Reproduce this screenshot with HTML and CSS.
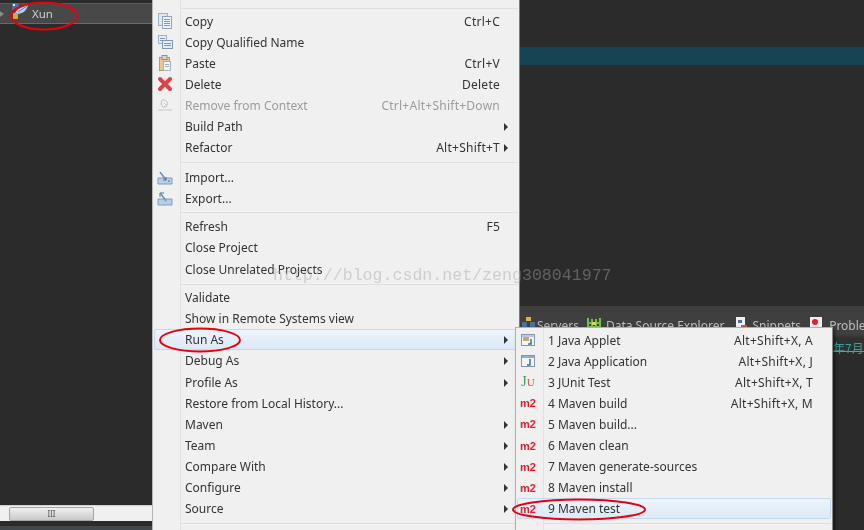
FILE: index.html
```html
<!DOCTYPE html>
<html lang="en">
<head>
<meta charset="utf-8">
<title>Run As menu</title>
<link rel="stylesheet" href="styles.css">
</head>
<body>
<div class="workbench">
  <div class="tree-row"><span class="twisty"></span>
    <svg class="ico" width="18" height="18" viewBox="0 0 18 18"><rect x="1" y="0" width="7" height="7" fill="#4a6f9c"/><rect x="2" y="1" width="2" height="2" fill="#dfe8f2"/><path d="M4 10C8 4 13 3 17 2c-1 5-5 9-11 9z" fill="#b9d0e8"/><path d="M7 9c3-2 6-4 9-6" stroke="#5f86b3" fill="none"/><rect x="2" y="10" width="5" height="6" rx="1" fill="#d9a53c"/></svg>
    <span class="tree-label">Xun</span></div>
  <div class="hscroll"><span class="thumb">III</span></div>
  <div class="statusbar"></div>
  <div class="teal"></div>
  <div class="panel">
    <div class="tabs">
      <span class="tab tab-servers"><svg width="13" height="13" viewBox="0 0 13 13"><rect x="4" y="0" width="5" height="4" fill="#d9b44a"/><rect x="0" y="5" width="5" height="5" fill="#4a6f9c"/><rect x="8" y="5" width="5" height="5" fill="#4a6f9c"/></svg>Servers</span>
      <span class="tab tab-ds"><svg width="14" height="14" viewBox="0 0 14 14"><path d="M1 1v12M5 2v11M9 2v11M13 1v12M1 6h12M1 10h12" stroke="#6fbf4a" stroke-width="2"/><rect x="5" y="5" width="4" height="3" fill="#e3d35a"/></svg>Data Source Explorer</span>
      <span class="tab tab-sn"><svg width="13" height="14" viewBox="0 0 13 14"><rect x="1" y="0" width="9" height="13" fill="#f0f0f0"/><rect x="3" y="3" width="4" height="3" fill="#4a6f9c"/><rect x="6" y="8" width="6" height="3" fill="#c65050"/></svg>Snippets</span>
      <span class="tab tab-pr"><svg width="13" height="14" viewBox="0 0 13 14"><rect x="0" y="0" width="12" height="13" fill="#eeeeee"/><circle cx="5" cy="5" r="3" fill="#e0202a"/></svg>Proble</span>
    </div>
    <div class="panel-date">年7月</div>
  </div>

  <div class="menu main-menu">
    <div class="gutter"></div>
    <div class="sep top"></div>
    <div class="item"><span class="i"><svg width="16" height="16" viewBox="0 0 16 16"><rect x="1.500" y="0.500" width="9" height="12" fill="#dfe8f2" stroke="#9db2c8"/><rect x="5.500" y="3.500" width="9" height="12" fill="#eef3f9" stroke="#8ea5bd"/><path d="M7 6.500h6M7 8.500h6M7 10.500h6M7 12.500h6" stroke="#7f99b5"/></svg></span><span class="t">Copy</span><span class="k">Ctrl+C</span></div>
    <div class="item"><span class="i"><svg width="16" height="16" viewBox="0 0 16 16"><rect x="1.500" y="1.500" width="8" height="8" fill="#e6edf5" stroke="#9db2c8"/><path d="M3 4.500h5M3 6.500h5" stroke="#7f99b5"/><rect x="5.500" y="6.500" width="10" height="8" fill="#e4edf6" stroke="#7f99b5"/><path d="M7 9.500h7M7 11.500h7" stroke="#7f99b5"/></svg></span><span class="t">Copy Qualified Name</span></div>
    <div class="item"><span class="i"><svg width="16" height="16" viewBox="0 0 16 16"><rect x="2.500" y="2.500" width="10" height="13" fill="#e5c88e" stroke="#b39a66"/><rect x="5" y="0.500" width="5" height="4" fill="#d6d6d6" stroke="#8f8f8f"/><rect x="6.500" y="6.500" width="7" height="9" fill="#f2f6fb" stroke="#9fb2c6"/><path d="M8 9.500h4M8 11.500h4" stroke="#9fb2c6"/></svg></span><span class="t">Paste</span><span class="k">Ctrl+V</span></div>
    <div class="item"><span class="i"><svg width="16" height="16" viewBox="0 0 16 16"><path d="M3 3l10 10M13 3L3 13" stroke="#d9434a" stroke-width="4" stroke-linecap="round"/></svg></span><span class="t">Delete</span><span class="k">Delete</span></div>
    <div class="item off"><span class="i"><svg width="16" height="16" viewBox="0 0 16 16"><path d="M5 3h3l3 3-2 4H6L4 7zM7 6l2 2M1 13h14" fill="none" stroke="#c4c4c4"/></svg></span><span class="t">Remove from Context</span><span class="k">Ctrl+Alt+Shift+Down</span></div>
    <div class="item sub"><span class="i"></span><span class="t">Build Path</span></div>
    <div class="item sub"><span class="i"></span><span class="t">Refactor</span><span class="k">Alt+Shift+T</span></div>
    <div class="sep s9"></div>
    <div class="item"><span class="i"><svg width="16" height="16" viewBox="0 0 16 16"><path d="M1 8h14v6H1z" fill="#b8cfe6" stroke="#7f9fbf"/><path d="M3 2l6 8" stroke="#6f8fb0" stroke-width="1.500"/><path d="M6 10h3V7M11 11h2" stroke="#4a6f9c" fill="none"/></svg></span><span class="t">Import...</span></div>
    <div class="item"><span class="i"><svg width="16" height="16" viewBox="0 0 16 16"><path d="M1 8h14v6H1z" fill="#b8cfe6" stroke="#7f9fbf"/><path d="M9 10L4 3" stroke="#6f8fb0" stroke-width="1.500"/><path d="M3 6V2h4" stroke="#4a6f9c" fill="none"/></svg></span><span class="t">Export...</span></div>
    <div class="sep s7"></div>
    <div class="item"><span class="i"></span><span class="t">Refresh</span><span class="k">F5</span></div>
    <div class="item"><span class="i"></span><span class="t">Close Project</span></div>
    <div class="item"><span class="i"></span><span class="t">Close Unrelated Projects</span></div>
    <div class="sep s8"></div>
    <div class="item"><span class="i"></span><span class="t">Validate</span></div>
    <div class="item"><span class="i"></span><span class="t">Show in Remote Systems view</span></div>
    <div class="item sub active"><span class="i"></span><span class="t">Run As</span></div>
    <div class="item sub"><span class="i"></span><span class="t">Debug As</span></div>
    <div class="item sub"><span class="i"></span><span class="t">Profile As</span></div>
    <div class="item"><span class="i"></span><span class="t">Restore from Local History...</span></div>
    <div class="item sub"><span class="i"></span><span class="t">Maven</span></div>
    <div class="item sub"><span class="i"></span><span class="t">Team</span></div>
    <div class="item sub"><span class="i"></span><span class="t">Compare With</span></div>
    <div class="item sub"><span class="i"></span><span class="t">Configure</span></div>
    <div class="item sub"><span class="i"></span><span class="t">Source</span></div>
    <div class="sep s9"></div>
  </div>

  <div class="menu sub-menu">
    <div class="gutter"></div>
    <div class="item"><span class="i"><svg width="16" height="16" viewBox="0 0 16 16"><rect x="1.500" y="2.500" width="13" height="11" fill="#f3f6fa" stroke="#7f99b5"/><rect x="2" y="3" width="12" height="2" fill="#b7cbe0"/><path d="M3 5h6v4H3z" fill="#c9a66b"/><path d="M11 7v5H8" fill="none" stroke="#3f6ea6" stroke-width="1.500"/></svg></span><span class="t">1 Java Applet</span><span class="k">Alt+Shift+X, A</span></div>
    <div class="item"><span class="i"><svg width="16" height="16" viewBox="0 0 16 16"><rect x="1.500" y="2.500" width="13" height="11" fill="#f3f6fa" stroke="#7f99b5"/><rect x="2" y="3" width="12" height="2" fill="#8fb0d3"/><path d="M10 6v6H7" fill="none" stroke="#3f6ea6" stroke-width="1.500"/></svg></span><span class="t">2 Java Application</span><span class="k">Alt+Shift+X, J</span></div>
    <div class="item"><span class="i ju"><b>J</b><em>U</em></span><span class="t">3 JUnit Test</span><span class="k">Alt+Shift+X, T</span></div>
    <div class="item"><span class="i m2">m2</span><span class="t">4 Maven build</span><span class="k">Alt+Shift+X, M</span></div>
    <div class="item"><span class="i m2">m2</span><span class="t">5 Maven build...</span></div>
    <div class="item"><span class="i m2">m2</span><span class="t">6 Maven clean</span></div>
    <div class="item"><span class="i m2">m2</span><span class="t">7 Maven generate-sources</span></div>
    <div class="item"><span class="i m2">m2</span><span class="t">8 Maven install</span></div>
    <div class="item active"><span class="i m2">m2</span><span class="t">9 Maven test</span></div>
    <div class="sep s9"></div>
  </div>

  <div class="watermark">http://blog.csdn.net/zeng308041977</div>

  <svg class="marks" width="864" height="530" viewBox="0 0 864 530">
    <ellipse cx="44" cy="16" rx="33" ry="13.500" />
    <ellipse cx="200" cy="340" rx="40" ry="11.500" />
    <ellipse cx="579" cy="509.500" rx="66" ry="10" />
  </svg>
</div>
</body>
</html>
```
FILE: styles.css
```css
html, body {
  margin: 0;
  padding: 0;
  background: #2b2b2b;
}
.workbench {
  position: relative;
  width: 864px;
  height: 530px;
  overflow: hidden;
  background: #2b2b2b;
  font-family: "Noto Sans", "Liberation Sans", sans-serif;
  font-size: 12px;
  color: #333333;
  filter: blur(0.45px);
}
.tree-row {
  position: absolute;
  left: 0;
  top: 3px;
  width: 152px;
  height: 19px;
  background: #484848;
  border-top: 1px solid #5a5a5a;
  border-bottom: 1px solid #6a6a60;
  display: flex;
  align-items: center;
}
.twisty {
  width: 0;
  height: 0;
  border-left: 4px solid #8a8a8a;
  border-top: 3px solid transparent;
  border-bottom: 3px solid transparent;
}
.ico {
  margin-left: 7px;
  margin-top: -4px;
}
.tree-label {
  margin-left: 3px;
  color: #cfcfcf;
  font-size: 11.500px;
}
.hscroll {
  position: absolute;
  left: 0;
  top: 505px;
  width: 152px;
  height: 16px;
  background: #f0f0f0;
  border-top: 1px solid #cfcfcf;
  box-sizing: border-box;
  display: flex;
  align-items: center;
}
.thumb {
  width: 85px;
  height: 14px;
  margin-left: 9px;
  border: 1px solid #a5a5a5;
  border-radius: 2px;
  background: linear-gradient(#f0f0f0, #c9c9c9);
  text-align: center;
  font-size: 8px;
  line-height: 12px;
  color: #555;
  box-sizing: border-box;
}
.statusbar {
  position: absolute;
  left: 0;
  top: 526px;
  width: 152px;
  height: 4px;
  background: #41474a;
}
.teal {
  position: absolute;
  left: 520px;
  right: 0;
  top: 47px;
  height: 18px;
  background: #164452;
}
.panel {
  position: absolute;
  left: 520px;
  right: 0;
  top: 306px;
  bottom: 0;
  background: #2b2b2b;
}
.tabs {
  height: 46px;
  background: linear-gradient(#3e3e3e 0, #404040 28px, #303030 32px);
  border-bottom: 1px solid #8c8c8c;
  box-sizing: border-box;
  display: flex;
  color: #bdbdbd;
  font-size: 12px;
  padding-top: 11px;
}
.tab {
  display: flex;
  gap: 4px;
  white-space: nowrap;
  height: 17px;
  align-items: flex-start;
}
.tab svg { flex: none; }
.tab-servers { margin-left: 2px; gap: 2px; }
.tab-ds { margin-left: 8px; gap: 5px; }
.tab-sn { margin-left: 11px; gap: 4px; }
.tab-pr { margin-left: 9px; gap: 6px; }
.panel-date {
  position: absolute;
  left: 313px;
  top: 33px;
  color: #3f9c9c;
  font-size: 12px;
  font-family: "Noto Sans CJK SC", "Noto Sans", sans-serif;
  white-space: nowrap;
}
.menu {
  position: absolute;
  background: #f0f0f0;
  box-sizing: border-box;
}
.main-menu {
  left: 152px;
  top: -2px;
  width: 368px;
  height: 540px;
  border-left: 1px solid #b5b5b5;
  border-right: 1px solid #7a7a7a;
  padding: 2px 1px 0;
}
.sub-menu {
  left: 515px;
  top: 327px;
  width: 318px;
  height: 210px;
  border: 1px solid #b0b0b0;
  border-right-color: #8a8a8a;
  padding: 1.500px 1px 0;
  box-shadow: 2px 2px 3px rgba(0, 0, 0, 0.45);
}
.gutter {
  position: absolute;
  left: 27px;
  top: 0;
  bottom: 0;
  width: 1px;
  background: #e2e2e2;
}
.item {
  position: relative;
  height: 21.100px;
  display: flex;
  align-items: center;
  box-sizing: border-box;
  padding-right: 17px;
  white-space: nowrap;
  border: 1px solid transparent;
}
.i {
  width: 20px;
  flex: none;
  display: flex;
  justify-content: center;
  align-items: center;
  margin-right: 10px;
}
.t { flex: 1; }
.k { letter-spacing: 0.25px; }
.off .t, .off .k { color: #9b9b9b; }
.active {
  background: linear-gradient(#eef4fb, #dce9f7);
  border: 1px solid #c3d9f0;
  border-radius: 2px;
}
.main-menu .active { margin-top: 0.500px; }
.sub::after {
  content: "";
  position: absolute;
  right: 9px;
  top: 6px;
  width: 0;
  height: 0;
  border-left: 4px solid #333;
  border-top: 4px solid transparent;
  border-bottom: 4px solid transparent;
}
.sep {
  border-top: 1px solid #e0e0e0;
  margin-left: 26px;
  box-sizing: border-box;
}
.top { height: 2.500px; margin-top: 8px; }
.s9 { height: 5px; margin-top: 4px; }
.s7 { height: 4px; margin-top: 3px; }
.s8 { height: 3px; margin-top: 4px; }
.m2 {
  color: #ee1c2a;
  font-family: "Liberation Sans", sans-serif;
  font-size: 11px;
  font-weight: 700;
}
.ju b {
  color: #3f9a52;
  font-family: "Liberation Serif", serif;
  font-size: 14px;
  font-weight: 400;
}
.ju em {
  color: #d9534f;
  font-family: "Liberation Serif", serif;
  font-size: 11px;
  font-style: normal;
}
.watermark {
  position: absolute;
  left: 273px;
  top: 266px;
  font-family: "Liberation Mono", monospace;
  font-size: 16.600px;
  color: rgba(165, 165, 165, 0.45);
  white-space: nowrap;
}
.marks {
  position: absolute;
  left: 0;
  top: 0;
  pointer-events: none;
}
.marks ellipse {
  fill: none;
  stroke: #e8000c;
  stroke-width: 2;
}
```
